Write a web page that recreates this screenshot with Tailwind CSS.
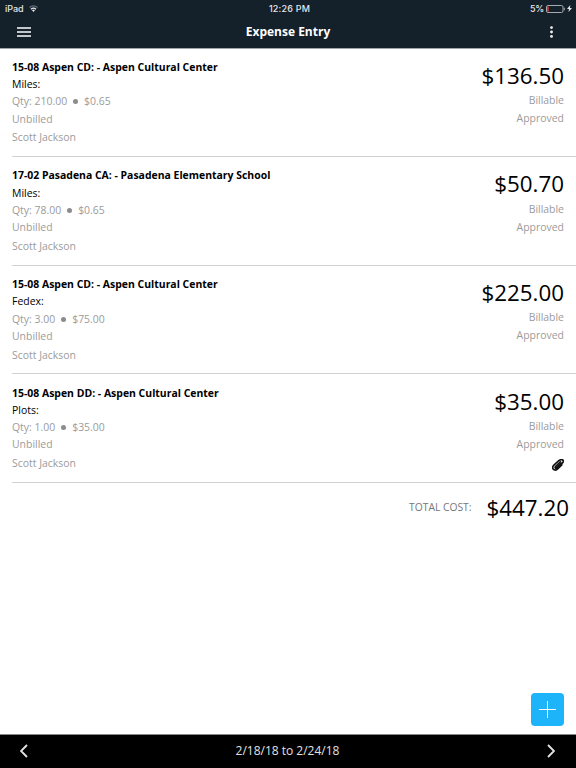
<!DOCTYPE html>
<html lang="en">

<head>
  <meta charset="UTF-8">
  <meta name="viewport" content="width=device-width, initial-scale=1.0">
  <script src="https://cdn.jsdelivr.net/npm/@tailwindcss/browser@4"></script>
  <title>Expense Entry</title>
</head>

<body class="bg-white font-['Open_Sans',sans-serif] text-black">
  <div class="relative flex flex-col w-[576px] h-[768px] overflow-hidden">
    <header class="h-[49px] shrink-0 bg-[#14202a] border-b border-[#a0a5a9] text-white">
      <!-- status bar -->
      <div class="grid grid-cols-3 items-center h-[17px] pl-[5px] pr-[4px] font-[Inter,sans-serif] text-[9px] leading-4 font-medium text-[#e4e6e8]">
        <div class="flex items-center gap-[5px]">
          <span>iPad</span>
          <svg class="w-[9px] h-[7px]" viewBox="0 0 18 14" fill="none" stroke="currentColor" stroke-width="2.4">
            <path d="M1 5a11.5 11.5 0 0 1 16 0" opacity="0.4" />
            <path d="M4 8.500a7 7 0 0 1 10 0" />
            <path d="M6 10.500a4.500 4.500 0 0 1 6 0L9 14z" fill="currentColor" stroke="none" />
          </svg>
        </div>
        <span class="pl-[2px] text-center tracking-[0.2px]">12:26 PM</span>
        <div class="flex items-center justify-end">
          <span class="mr-[2px] tracking-[-0.3px]">5%</span>
          <svg class="w-[19px] h-[8px]" viewBox="0 0 19 8" fill="none">
            <rect x="0.500" y="0.500" width="16.500" height="7" rx="1.500" stroke="#a5abb0" />
            <rect x="1.200" y="1.500" width="1.500" height="5" fill="#ef3b30" />
            <path d="M18.300 2.800v2.400" stroke="#a5abb0" />
          </svg>
          <svg class="w-[5px] h-[7px] ml-[2px]" viewBox="0 0 5 7" fill="currentColor">
            <path d="M3.300 0 0 4h2L1.500 7 5 3H2.900z" />
          </svg>
        </div>
      </div>
      <!-- title bar -->
      <div class="grid grid-cols-[1fr_auto_1fr] items-center h-[29px] px-[17px]">
        <button class="w-[14px] h-[10px] flex flex-col justify-between">
          <span class="block w-full h-[2px] bg-[#c3c7ca]"></span>
          <span class="block w-full h-[2px] bg-[#c3c7ca]"></span>
          <span class="block w-full h-[2px] bg-[#c3c7ca]"></span>
        </button>
        <h1 class="text-[12px] font-bold">Expense Entry</h1>
        <button class="ml-auto mr-[6px]">
          <svg class="w-[3px] h-[12px]" viewBox="0 0 3 12" fill="#eceeef">
            <circle cx="1.500" cy="1.600" r="1.450" />
            <circle cx="1.500" cy="6" r="1.450" />
            <circle cx="1.500" cy="10.400" r="1.450" />
          </svg>
        </button>
      </div>
    </header>

    <main class="flex-1">
      <ul class="-mt-[0.700px] pl-[12px] text-[10.450px] leading-[17.300px] text-[#9b9b9b]">
        <li class="flex justify-between h-[108.670px] pt-[10.300px] pr-[12px] border-b border-[#d2d2d2]">
          <div>
            <p class="font-bold text-black">15-08 Aspen CD: - Aspen Cultural Center</p>
            <p class="text-black">Miles:</p>
            <p class="flex items-center">Qty: 210.00<span class="mx-[6px] size-[5px] rounded-full bg-[#8c8c8c]"></span>$0.65</p>
            <p>Unbilled</p>
            <p class="mt-[1.500px]">Scott Jackson</p>
          </div>
          <div class="text-right">
            <p class="text-[22.350px] leading-[34px] text-black">$136.50</p>
            <p class="leading-[18px] -mt-[1.500px]">Billable</p>
            <p class="leading-[18px]">Approved</p>
          </div>
        </li>
        <li class="flex justify-between h-[108.670px] pt-[10.300px] pr-[12px] border-b border-[#d2d2d2]">
          <div>
            <p class="font-bold text-black">17-02 Pasadena CA: - Pasadena Elementary School</p>
            <p class="text-black">Miles:</p>
            <p class="flex items-center">Qty: 78.00<span class="mx-[6px] size-[5px] rounded-full bg-[#8c8c8c]"></span>$0.65</p>
            <p>Unbilled</p>
            <p class="mt-[1.500px]">Scott Jackson</p>
          </div>
          <div class="text-right">
            <p class="text-[22.350px] leading-[34px] text-black">$50.70</p>
            <p class="leading-[18px] -mt-[1.500px]">Billable</p>
            <p class="leading-[18px]">Approved</p>
          </div>
        </li>
        <li class="flex justify-between h-[108.670px] pt-[10.300px] pr-[12px] border-b border-[#d2d2d2]">
          <div>
            <p class="font-bold text-black">15-08 Aspen CD: - Aspen Cultural Center</p>
            <p class="text-black">Fedex:</p>
            <p class="flex items-center">Qty: 3.00<span class="mx-[6px] size-[5px] rounded-full bg-[#8c8c8c]"></span>$75.00</p>
            <p>Unbilled</p>
            <p class="mt-[1.500px]">Scott Jackson</p>
          </div>
          <div class="text-right">
            <p class="text-[22.350px] leading-[34px] text-black">$225.00</p>
            <p class="leading-[18px] -mt-[1.500px]">Billable</p>
            <p class="leading-[18px]">Approved</p>
          </div>
        </li>
        <li class="flex justify-between h-[108.670px] pt-[10.300px] pr-[12px] border-b border-[#d2d2d2]">
          <div>
            <p class="font-bold text-black">15-08 Aspen DD: - Aspen Cultural Center</p>
            <p class="text-black">Plots:</p>
            <p class="flex items-center">Qty: 1.00<span class="mx-[6px] size-[5px] rounded-full bg-[#8c8c8c]"></span>$35.00</p>
            <p>Unbilled</p>
            <p class="mt-[1.500px]">Scott Jackson</p>
          </div>
          <div class="text-right">
            <p class="text-[22.350px] leading-[34px] text-black">$35.00</p>
            <p class="leading-[18px] -mt-[1.500px]">Billable</p>
            <p class="leading-[18px]">Approved</p>
            <svg class="ml-auto mt-[6px] w-[12px] h-[12px]" viewBox="0 0 12 12" fill="none" stroke="#111" stroke-width="1.600" stroke-linecap="round">
              <path d="M9.800 5.900 5.400 10.300C3.700 12 .1 10.700.8 7.700c.2-.7.600-1.100 1.100-1.600L6.800 1.700C8.600.1 11.200.3 11.300 1.900c.1 1-.4 1.700-1.100 2.400L5.300 9c-1 .9-2.700.1-2-1.200L8.400 2.900" />
              <path d="M9.300 4 4.600 8.500" />
            </svg>
          </div>
        </li>
      </ul>
      <div class="flex items-center justify-end h-[49px] pr-[7px]">
        <span class="text-[10.300px] text-[#777]">TOTAL COST:</span>
        <span class="ml-[15px] text-[22.350px]">$447.20</span>
      </div>
    </main>

    <button class="absolute right-[12px] bottom-[42px] grid place-items-center size-[33px] rounded-[4px] bg-[#1eb4fa]">
      <svg class="size-[17px]" viewBox="0 0 17 17" stroke="white" stroke-width="1">
        <path d="M8.500 0v17M0 8.500h17" />
      </svg>
    </button>

    <footer class="flex items-center justify-between h-[34px] shrink-0 pl-[20px] pr-[21px] pb-[2px] bg-black border-t border-[#888] text-[#e2e2e2]">
      <svg class="w-[8px] h-[14px]" viewBox="0 0 8 14" fill="none" stroke="currentColor" stroke-width="1.900">
        <path d="M7 1 1 7l6 6" />
      </svg>
      <span class="text-[12px] pt-px">2/18/18 to 2/24/18</span>
      <svg class="w-[8px] h-[14px]" viewBox="0 0 8 14" fill="none" stroke="currentColor" stroke-width="1.900">
        <path d="m1 1 6 6-6 6" />
      </svg>
    </footer>
  </div>
</body>

</html>
